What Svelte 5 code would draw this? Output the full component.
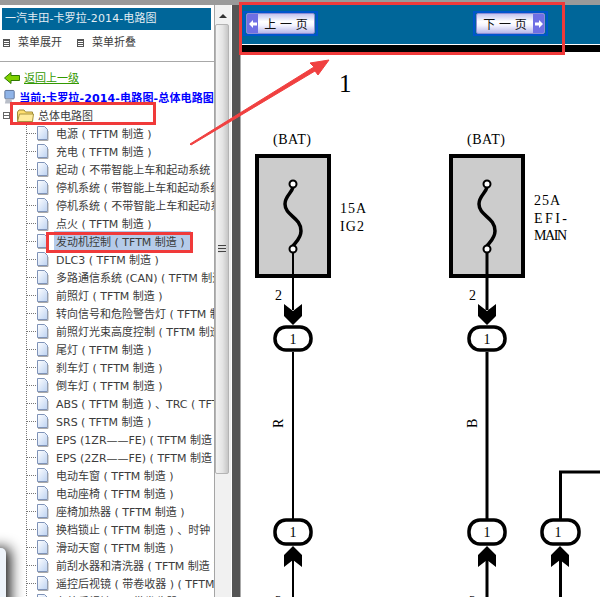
<script>
  const m = ' ( TFTM 制造 )';
  const rows = [
    '电源' + m,
    '充电' + m,
    '起动 ( 不带智能上车和起动系统 )' + m,
    '停机系统 ( 带智能上车和起动系统 )' + m,
    '停机系统 ( 不带智能上车和起动系统 )' + m,
    '点火' + m,
    '发动机控制' + m,
    'DLC3' + m,
    '多路通信系统 (CAN)' + m,
    '前照灯' + m,
    '转向信号和危险警告灯' + m,
    '前照灯光束高度控制' + m,
    '尾灯' + m,
    '刹车灯' + m,
    '倒车灯' + m,
    'ABS' + m + ' 、TRC' + m,
    'SRS' + m,
    'EPS (1ZR——FE)' + m,
    'EPS (2ZR——FE)' + m,
    '电动车窗' + m,
    '电动座椅' + m,
    '座椅加热器' + m,
    '换档锁止' + m + ' 、时钟',
    '滑动天窗' + m,
    '前刮水器和清洗器' + m,
    '遥控后视镜 ( 带卷收器 )' + m,
    '车外后视镜 ( 不带卷收器 )' + m
  ];
  const selected = 6;

  const fuses = [
    { x: 255, cx: 293, wire: 2, tag: 'R', label: [['15A', 26], ['IG2', 24]], ly: 213 },
    { x: 449, cx: 487, wire: 3, tag: 'B', label: [['25A', 26], ['EFI-', 33], ['MAIN', 33]], ly: 205 }
  ];
</script>

<div class="page">
  <div class="strip"></div>
  <div class="body">
    <aside class="side">
      <div class="tree">
        <h1>一汽丰田-卡罗拉-2014-电路图</h1>
        <div class="menu">
          <span class="menu-item"><i class="menu-ico"></i>菜单展开</span>
          <span class="menu-item"><i class="menu-ico"></i>菜单折叠</span>
        </div>
        <hr />
        <div class="back">
          <svg width="16" height="12" viewBox="0 0 16 12">
            <path d="M.5 6 7 .5V3.5h8.500v5H7v3z" fill="#7fd000" stroke="#2f7a00" />
          </svg>
          <span>返回上一级</span>
        </div>
        <div class="current">
          <svg width="13" height="16" viewBox="0 0 13 16">
            <rect x="2" y="1" width="10" height="9" rx="1" fill="#8fb4e8" stroke="#5a6f96" />
            <path d="M3 10h6l1 5H2z" fill="#b9bec8" />
          </svg>
          <b>当前:卡罗拉-2014-电路图-总体电路图</b>
        </div>
        <div class="root">
          <i class="minus"></i>
          <svg width="17" height="13" viewBox="0 0 17 13">
            <path d="M.5 3 2 1h5l1.500 2h7v9.500H.5z" fill="#ffdf70" stroke="#a08c38" />
            <path d="M.5 12.500 2.500 5h14l-1 7.500z" fill="#ffeb9c" stroke="#a89440" />
          </svg>
          <span>总体电路图</span>
        </div>
        <ul>
          {#each rows as row, i}
            <li>
              <svg width="13" height="15" viewBox="0 0 13 15">
                <defs>
                  <linearGradient id="doc{i}" x1="0" y1="0" x2="1" y2="1">
                    <stop offset="0" stop-color="#ffffff" />
                    <stop offset="1" stop-color="#bcd2f2" />
                  </linearGradient>
                </defs>
                <path d="M1.500.5h7l3 3v10h-10z" fill="url(#doc{i})" stroke="#7f93b8" />
                <path d="M2 14.500h10V5" fill="none" stroke="#a9a9a9" />
              </svg>
              <span class:sel={i === selected}>{row}</span>
            </li>
          {/each}
        </ul>
      </div>
      <div class="scroll">
        <div class="up"></div>
        <div class="thumb"><i></i></div>
      </div>
    </aside>
    <div class="split"></div>
    <main>
      <div class="bar">
        <button class="pg">
          <span class="inner">
            <i class="cap">
              <svg width="10" height="10" viewBox="0 0 10 10"><path d="M1 5l4-4v2.500h4v3H5V9z" fill="#fff" /></svg>
            </i>
            <em>上 一 页</em>
          </span>
        </button>
        <button class="pg">
          <span class="inner">
            <em>下 一 页</em>
            <i class="cap">
              <svg width="10" height="10" viewBox="0 0 10 10"><path d="M9 5L5 1v2.500H1v3h4V9z" fill="#fff" /></svg>
            </i>
          </span>
        </button>
      </div>
      <div class="rule"></div>
      <svg class="diagram" width="359" height="545" viewBox="241 52 359 545">
        <text x="339" y="92" class="num">1</text>

        {#each fuses as f}
          <text x={f.cx - 20} y="144" class="lab" textLength="38">(BAT)</text>
          <rect x={f.x + 2} y="156" width="72" height="120" fill="#cccccc" stroke="#000" stroke-width="4" />
          <path
            d="M{f.cx} 187c-1 6-8 9-8 17 0 12 16 13 16 27 0 7-5 11-8 15"
            fill="none" stroke="#000" stroke-width="3.500"
          />
          <circle cx={f.cx} cy="184" r="3.500" fill="#fff" stroke="#000" stroke-width="2" />
          <circle cx={f.cx} cy="249" r="3.500" fill="#fff" stroke="#000" stroke-width="2" />
          {#each f.label as [t, w], n}
            <text x={f.x + 85} y={f.ly + n * 17.500} class="lab" textLength={w}>{t}</text>
          {/each}
          <line x1={f.cx} y1="253" x2={f.cx} y2="310" stroke="#000" stroke-width={f.wire} />
          <text x={f.cx - 18} y="300" class="lab">2</text>
          <path d="M{f.cx - 9} 304l9 7 9-7v12l-9 9-9-9z" fill="#000" />
          <rect x={f.cx - 18} y="327" width="36" height="23" rx="11" fill="#fff" stroke="#000" stroke-width="3.500" />
          <text x={f.cx} y="344" class="lab mid">1</text>
          <line x1={f.cx} y1="352" x2={f.cx} y2="520" stroke="#000" stroke-width={f.wire} />
          <text transform="translate({f.cx - 10} 428) rotate(-90)" class="lab">{f.tag}</text>
          <rect x={f.cx - 18} y="520" width="36" height="24" rx="11" fill="#fff" stroke="#000" stroke-width="3.500" />
          <text x={f.cx} y="537" class="lab mid">1</text>
          <path d="M{f.cx} 546l9 9v12l-9-7-9 7v-12z" fill="#000" />
          <line x1={f.cx} y1="556" x2={f.cx} y2="597" stroke="#000" stroke-width={f.wire} />
          <text x={f.cx - 18} y="606" class="lab">2</text>
        {/each}

        <path d="M560.500 520V472H600" fill="none" stroke="#000" stroke-width="3" />
        <rect x="542" y="520" width="37" height="24" rx="11" fill="#fff" stroke="#000" stroke-width="3.500" />
        <text x="558" y="537" class="lab mid">1</text>
        <path d="M560 546l9 9v12l-9-7-9 7v-12z" fill="#000" />
        <line x1="560.500" y1="556" x2="560.500" y2="597" stroke="#000" stroke-width="3" />
      </svg>
    </main>
  </div>

  <!-- annotations drawn over the screenshot -->
  <div class="mark" style="left:10px;top:102px;width:140px;height:17px"></div>
  <div class="mark" style="left:46px;top:232px;width:141px;height:15px"></div>
  <div class="mark" style="left:239px;top:2px;width:320px;height:47px"></div>
  <svg class="arrow" width="600" height="597" viewBox="0 0 600 597">
    <path d="M190 144 314 67 310 63 329 60 318 75 315 71 191 145z" fill="#f04040" stroke="#f04040" stroke-linejoin="round" />
  </svg>
  <div class="peek"></div>
</div>

<style>
  :global(body) {
    margin: 0;
    background: #fff;
  }

  .page {
    position: relative;
    width: 600px;
    height: 597px;
    overflow: hidden;
    font-family: "DejaVu Sans", "Noto Sans CJK SC", sans-serif;
    font-size: 11px;
    color: #3c3c3c;
  }

  .strip {
    height: 5px;
    background: #9a9a9a;
  }

  .body {
    display: flex;
    height: 592px;
  }

  .side {
    display: flex;
    flex: 0 0 231px;
  }

  .tree {
    flex: 0 0 214px;
    overflow: hidden;
    padding-top: 3px;
    box-sizing: border-box;
  }

  h1 {
    margin: 0 3px 0 2px;
    height: 22px;
    padding-left: 3px;
    background: #006699;
    color: #e4eef4;
    font-size: 11px;
    font-weight: 400;
    line-height: 22px;
    letter-spacing: 0.1px;
  }

  .menu {
    display: flex;
    gap: 15px;
    height: 18px;
    margin-top: 4px;
    padding-left: 3px;
    line-height: 18px;
  }

  .menu-item {
    display: flex;
    align-items: center;
    gap: 8px;
  }

  .menu-ico {
    width: 5px;
    height: 6px;
    border: 1px solid #555;
    background: repeating-linear-gradient(#555 0 1px, #fff 1px 2px);
  }

  hr {
    margin: 9px 0 7px;
    border: 0;
    height: 1px;
    background: #a8a8a8;
  }

  .back,
  .current,
  .root {
    display: flex;
    align-items: center;
    height: 18px;
    white-space: nowrap;
  }

  .back {
    gap: 4px;
    padding-left: 4px;
    margin-bottom: 1px;
    color: #339900;
  }

  .back span {
    text-decoration: underline;
    margin-top: -2px;
  }

  .current {
    gap: 4px;
    padding-left: 3px;
    color: #0000ff;
  }

  .current b {
    font-weight: 700;
    font-size: 11px;
    letter-spacing: 0.15px;
  }

  .root {
    padding-left: 3px;
  }

  .minus {
    flex: none;
    width: 7px;
    height: 7px;
    margin-right: 7px;
    border: 1px solid #666;
    box-sizing: border-box;
    background: linear-gradient(#666, #666) center / 5px 1px no-repeat;
  }

  .root span {
    margin-left: 4px;
  }

  ul {
    list-style: none;
    margin: 0 0 0 26px;
    padding: 0;
    border-left: 1px dotted #777;
  }

  li {
    position: relative;
    display: flex;
    align-items: center;
    height: 18px;
    padding-left: 9px;
    white-space: nowrap;
  }

  li::before {
    content: '';
    position: absolute;
    left: 0;
    top: 9px;
    width: 9px;
    border-top: 1px dotted #777;
  }

  li svg {
    flex: none;
    margin-right: 7px;
  }

  li span {
    padding: 2px 6px 2px 2px;
    margin-left: -2px;
  }

  .sel {
    background: #b5cbe9;
  }

  .scroll {
    flex: 1;
    display: flex;
    flex-direction: column;
    border-left: 1px solid #a5a5a5;
    background: #f1f1f1;
  }

  .up {
    position: relative;
    height: 19px;
  }

  .up::after {
    content: '';
    position: absolute;
    left: 4px;
    top: 9px;
    border: 4px solid transparent;
    border-top: 0;
    border-bottom: 4px solid #333;
  }

  .thumb {
    display: flex;
    align-items: center;
    justify-content: center;
    height: 450px;
    width: 14px;
    border: 1px solid #b4b4b4;
    border-radius: 2px;
    box-sizing: border-box;
    background: linear-gradient(90deg, #f4f4f4, #e4e4e4 55%, #c6c6c6);
  }

  .thumb i {
    width: 8px;
    height: 8px;
    background: repeating-linear-gradient(#444 0 1px, #ddd 1px 3px);
  }

  .split {
    flex: 0 0 8px;
    margin-left: 1px;
    background: #555;
    border-right: 1px solid #aaa;
  }

  main {
    flex: 1;
    min-width: 0;
  }

  .bar {
    display: flex;
    justify-content: space-between;
    align-items: flex-start;
    height: 39px;
    padding: 6px 52px 0 2px;
    box-sizing: border-box;
    background: #006699;
  }

  .pg {
    display: block;
    width: 75px;
    height: 25px;
    padding: 0;
    border: 2px solid #0055cc;
    background: #006699;
    box-sizing: border-box;
    font: inherit;
  }

  .inner {
    display: flex;
    align-items: center;
    height: 100%;
    margin: 0 1px;
    box-sizing: border-box;
    border: 1px solid #8c8cd4;
    border-radius: 2px;
    background: linear-gradient(#c4c4ee, #fff 40%, #f4f4ff 60%, #b8b8ea);
    overflow: hidden;
  }

  .inner em {
    flex: 1;
    font-style: normal;
    font-size: 12px;
    color: #111;
    text-align: center;
    white-space: nowrap;
  }

  .cap {
    display: flex;
    align-items: center;
    justify-content: center;
    flex: 0 0 11px;
    align-self: stretch;
    background: #6f6fe4;
  }

  .rule {
    height: 8px;
    border-top: 1px solid #fff;
    background: #000;
    box-sizing: border-box;
  }

  .diagram {
    display: block;
    background: #fff;
  }

  .num {
    font: 25px "Liberation Serif", serif;
  }

  .lab {
    font: 14px "Liberation Serif", serif;
  }

  .mid {
    text-anchor: middle;
  }

  .mark {
    position: absolute;
    border: 3px solid #f03a3a;
  }

  .arrow {
    position: absolute;
    inset: 0;
    pointer-events: none;
  }

  .peek {
    position: absolute;
    left: -14px;
    top: 548px;
    width: 20px;
    height: 70px;
    background: #eef4fb;
    border-radius: 5px;
    box-shadow: 4px 0 14px rgba(0, 0, 0, 0.95);
  }
</style>
